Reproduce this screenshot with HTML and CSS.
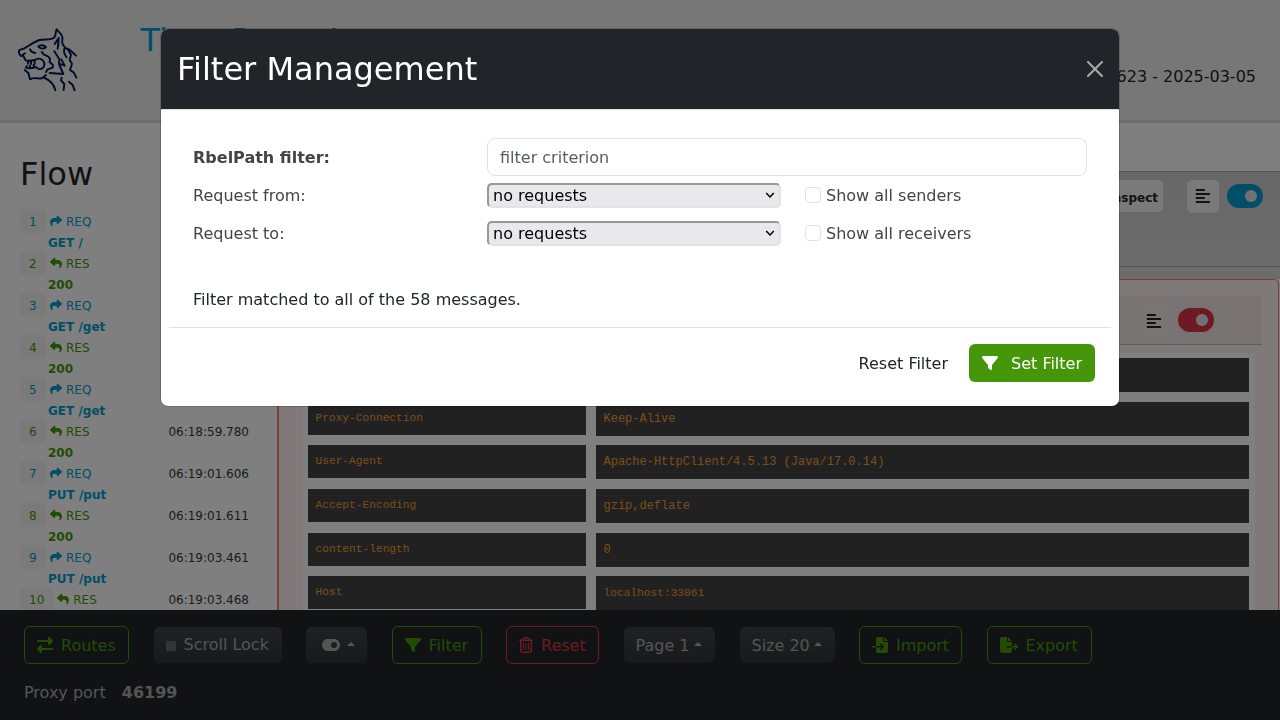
FILE: index.html
```
<!DOCTYPE html>
<html lang="en">
<head>
<meta charset="utf-8">
<title>Tiger Proxy Log</title>
<link rel="stylesheet" href="styles.css">
</head>
<body>
<svg width="0" height="0" class="sprite" aria-hidden="true">
  <symbol id="share" viewBox="0 0 512 512"><path d="M307 34.8c-11.5 5.1-19 16.6-19 29.2v64H176C78.8 128 0 206.8 0 304C0 417.3 81.5 467.9 100.2 478.1c2.5 1.4 5.3 1.9 8.1 1.9c10.9 0 19.7-8.9 19.7-19.7c0-7.5-4.3-14.4-9.8-19.5C108.8 431.9 96 414.4 96 384c0-53 43-96 96-96h96v64c0 12.6 7.4 24.1 19 29.2s25 3 34.4-5.4l160-144c6.7-6.1 10.6-14.7 10.6-23.8s-3.8-17.7-10.6-23.8l-160-144c-9.4-8.5-22.9-10.6-34.4-5.4z"/></symbol>
  <symbol id="filter" viewBox="0 0 512 512"><path d="M3.9 54.9C10.5 40.9 24.5 32 40 32H472c15.5 0 29.5 8.9 36.1 22.9s4.6 30.5-5.2 42.5L320 320.9V448c0 12.1-6.8 23.2-17.7 28.6s-23.8 4.3-33.5-3l-64-48c-8.1-6-12.8-15.5-12.8-25.6V320.9L9 97.3C-.7 85.4-2.8 68.8 3.9 54.9z"/></symbol>
  <symbol id="lines" viewBox="0 0 16 16"><path d="M.8 2h9M.8 6H15M.8 10h9M.8 14H15" fill="none" stroke="currentColor" stroke-width="2"/></symbol>
</svg>

<div class="page">
  <header class="topbar">
    <svg class="logo" viewBox="0 0 240 240" width="80" height="80">
      <path d="M45 100C36 102 38 112 32 107C24 98 24 90 34 88C46 88 54 74 88 60C104 56 124 62 133 52C139 44 136 34 140 28C146 38 160 42 157 58C155 70 158 74 166 84L180 90L198 107"/>
      <path d="M85 80C90 73 103 75 108 81C101 88 91 87 85 80M60 88Q64 98 76 99M95 96L102 104L114 109L120 116L119 126L129 135L128 143L113 148L108 156"/>
      <path d="M40 108L47 121C58 125 68 120 77 119C88 112 100 118 103 129C105 143 94 149 86 147L77 141M54 124V131M63 122V132M74 121V132M50 143V138M60 143V137M71 141V135M47 143C56 146 68 145 77 141M44 150L55 159L60 178C72 170 82 177 96 175L108 165M104 174C118 180 132 194 136 211"/>
      <path d="M134 72L146 54L145 76M146 54L143 86M133 94L148 118L147 131L164 137L154 118M148 135L160 162L119 159M163 86C159 98 164 104 170 112M175 91L183 104L179 120L186 131L180 150L191 157L199 173M155 173L153 181L163 192L161 210M177 185L188 195L194 211"/>
    </svg>
    <h1 class="brand">Tiger Proxy Log</h1>
    <span class="build">623 - 2025-03-05</span>
  </header>

  <div class="content">
    <aside class="flow">
      <h2 class="flow-title">Flow</h2>
      <div class="entry req"><div class="line"><span class="num">1</span><svg class="arrow"><use href="#share"/></svg><span>REQ</span></div><b>GET /</b></div>
      <div class="entry res"><div class="line"><span class="num">2</span><svg class="arrow flip"><use href="#share"/></svg><span>RES</span></div><b>200</b></div>
      <div class="entry req"><div class="line"><span class="num">3</span><svg class="arrow"><use href="#share"/></svg><span>REQ</span></div><b>GET /get</b></div>
      <div class="entry res"><div class="line"><span class="num">4</span><svg class="arrow flip"><use href="#share"/></svg><span>RES</span></div><b>200</b></div>
      <div class="entry req"><div class="line"><span class="num">5</span><svg class="arrow"><use href="#share"/></svg><span>REQ</span></div><b>GET /get</b></div>
      <div class="entry res"><div class="line"><span class="num">6</span><svg class="arrow flip"><use href="#share"/></svg><span>RES</span><time>06:18:59.780</time></div><b>200</b></div>
      <div class="entry req"><div class="line"><span class="num">7</span><svg class="arrow"><use href="#share"/></svg><span>REQ</span><time>06:19:01.606</time></div><b>PUT /put</b></div>
      <div class="entry res"><div class="line"><span class="num">8</span><svg class="arrow flip"><use href="#share"/></svg><span>RES</span><time>06:19:01.611</time></div><b>200</b></div>
      <div class="entry req"><div class="line"><span class="num">9</span><svg class="arrow"><use href="#share"/></svg><span>REQ</span><time>06:19:03.461</time></div><b>PUT /put</b></div>
      <div class="entry res"><div class="line"><span class="num">10</span><svg class="arrow flip"><use href="#share"/></svg><span>RES</span><time>06:19:03.468</time></div></div>
    </aside>

    <main class="messages">
      <div class="msg-head">
        <button class="inspect">Inspect</button>
        <button class="square"><svg width="16" height="16"><use href="#lines"/></svg></button>
        <span class="toggle blue"></span>
      </div>
      <div class="msg-gap"></div>
      <section class="card">
        <div class="card-head">
          <button class="square"><svg width="16" height="16"><use href="#lines"/></svg></button>
          <span class="toggle red"></span>
        </div>
        <div class="headers">
          <div class="row"><span class="key"></span><span class="val"></span></div>
          <div class="row"><span class="key">Proxy-Connection</span><span class="val">Keep-Alive</span></div>
          <div class="row"><span class="key">User-Agent</span><span class="val">Apache-HttpClient/4.5.13 (Java/17.0.14)</span></div>
          <div class="row"><span class="key">Accept-Encoding</span><span class="val">gzip,deflate</span></div>
          <div class="row"><span class="key">content-length</span><span class="val">0</span></div>
          <div class="row"><span class="key">Host</span><span class="val small">localhost:33061</span></div>
        </div>
      </section>
    </main>
  </div>

  <footer class="bottombar">
    <div class="tools">
      <button class="btn green w-routes"><svg width="16" height="16" viewBox="0 0 512 512"><path d="M32 96l320 0V32c0-12.9 7.8-24.6 19.8-29.6s25.7-2.2 34.9 6.9l96 96c6 6 9.4 14.1 9.4 22.6s-3.4 16.6-9.4 22.6l-96 96c-9.2 9.2-22.9 11.9-34.9 6.9s-19.8-16.6-19.8-29.6V160L32 160c-17.7 0-32-14.3-32-32s14.3-32 32-32zM480 352c17.7 0 32 14.3 32 32s-14.3 32-32 32H160v64c0 12.9-7.8 24.6-19.8 29.6s-25.7 2.2-34.9-6.9l-96-96c-6-6-9.4-14.1-9.4-22.6s3.4-16.6 9.4-22.6l96-96c9.2-9.2 22.9-11.9 34.9-6.9s19.8 16.6 19.8 29.6l0 64H480z"/></svg><span>Routes</span></button>
      <button class="btn dark w-scroll"><i class="box"></i><span>Scroll Lock</span></button>
      <button class="btn dark w-toggle"><svg width="18" height="16" viewBox="0 0 576 512"><path d="M192 64C86 64 0 150 0 256S86 448 192 448H384c106 0 192-86 192-192s-86-192-192-192H192zm192 96a96 96 0 1 1 0 192 96 96 0 1 1 0-192z"/></svg><i class="caret"></i></button>
      <button class="btn green w-filter"><svg width="16" height="16"><use href="#filter"/></svg><span>Filter</span></button>
      <button class="btn danger w-reset"><svg width="14" height="16" viewBox="0 0 448 512"><path d="M170.5 51.6L151.5 80h145l-19-28.4c-1.5-2.2-4-3.6-6.7-3.6H177.1c-2.7 0-5.2 1.3-6.7 3.6zm147-26.6L354.2 80H368h48 8c13.3 0 24 10.7 24 24s-10.7 24-24 24h-8V432c0 44.2-35.8 80-80 80H112c-44.2 0-80-35.8-80-80V128H24c-13.3 0-24-10.7-24-24S10.7 80 24 80h8H80 93.8l36.7-55.1C140.9 9.4 158.4 0 177.1 0h93.7c18.7 0 36.2 9.4 46.6 24.9zM80 128V432c0 17.7 14.3 32 32 32H336c17.7 0 32-14.3 32-32V128H80zm80 64V400c0 8.8-7.2 16-16 16s-16-7.2-16-16V192c0-8.8 7.2-16 16-16s16 7.2 16 16zm80 0V400c0 8.8-7.2 16-16 16s-16-7.2-16-16V192c0-8.8 7.2-16 16-16s16 7.2 16 16zm80 0V400c0 8.8-7.2 16-16 16s-16-7.2-16-16V192c0-8.8 7.2-16 16-16s16 7.2 16 16z"/></svg><span>Reset</span></button>
      <button class="btn dark w-page"><span>Page 1</span><i class="caret"></i></button>
      <button class="btn dark w-size"><span>Size 20</span><i class="caret"></i></button>
      <button class="btn green w-import"><svg width="16" height="16" viewBox="0 0 512 512"><path d="M128 64c0-35.3 28.7-64 64-64H352V128c0 17.7 14.3 32 32 32H512V448c0 35.3-28.7 64-64 64H192c-35.3 0-64-28.7-64-64V336H302.1l-39 39c-9.4 9.4-9.4 24.6 0 33.9s24.6 9.4 33.9 0l80-80c9.4-9.4 9.4-24.6 0-33.9l-80-80c-9.4-9.4-24.6-9.4-33.9 0s-9.4 24.6 0 33.9l39 39H128V64zm0 224v48H24c-13.3 0-24-10.7-24-24s10.7-24 24-24H128zM512 128H384V0L512 128z"/></svg><span>Import</span></button>
      <button class="btn green w-export"><svg width="18" height="16" viewBox="0 0 576 512"><path d="M0 64C0 28.7 28.7 0 64 0H224V128c0 17.7 14.3 32 32 32H384V288H216c-13.3 0-24 10.7-24 24s10.7 24 24 24H384V448c0 35.3-28.7 64-64 64H64c-35.3 0-64-28.7-64-64V64zM384 336V288H494.1l-39-39c-9.4-9.4-9.4-24.6 0-33.9s24.6-9.4 33.9 0l80 80c9.4 9.4 9.4 24.6 0 33.9l-80 80c-9.4 9.4-24.6 9.4-33.9 0s-9.4-24.6 0-33.9l39-39H384zm0-208H256V0L384 128z"/></svg><span>Export</span></button>
    </div>
    <div class="port">Proxy port <b>46199</b></div>
  </footer>
</div>

<div class="backdrop">
  <div class="modal">
    <div class="modal-head">
      <h2>Filter Management</h2>
      <svg class="close" width="16" height="16" viewBox="0 0 16 16"><path d="M.293.293a1 1 0 0 1 1.414 0L8 6.586 14.293.293a1 1 0 1 1 1.414 1.414L9.414 8l6.293 6.293a1 1 0 0 1-1.414 1.414L8 9.414l-6.293 6.293a1 1 0 0 1-1.414-1.414L6.586 8 .293 1.707a1 1 0 0 1 0-1.414z"/></svg>
    </div>
    <div class="modal-body">
      <div class="form">
        <label class="strong">RbelPath filter:</label>
        <input class="criterion" type="text" placeholder="filter criterion">
        <label>Request from:</label>
        <select><option>no requests</option></select>
        <label class="check"><input type="checkbox"><span>Show all senders</span></label>
        <label>Request to:</label>
        <select><option>no requests</option></select>
        <label class="check"><input type="checkbox"><span>Show all receivers</span></label>
      </div>
      <p class="matched">Filter matched to all of the 58 messages.</p>
    </div>
    <div class="modal-foot">
      <button class="plain">Reset Filter</button>
      <button class="set"><svg width="16" height="16"><use href="#filter"/></svg><span>Set Filter</span></button>
    </div>
  </div>
</div>
</body>
</html>
```
FILE: styles.css
```
* { box-sizing: border-box; }
body {
  margin: 0;
  font: 16px/24px "DejaVu Sans", sans-serif;
  color: #212529;
  overflow: hidden;
}
h1, h2, p { margin: 0; font-weight: 400; }
button { font: inherit; color: inherit; border: 0; padding: 0; }
svg { fill: currentColor; flex: none; }
.sprite { position: absolute; }

.page { height: 720px; display: flex; flex-direction: column; background: #fff; }

.topbar {
  height: 123px; flex: none; display: flex; align-items: flex-start;
  background: #eee; border-bottom: 3px solid #d8d8d8; padding: 20px 24px 0 10px;
}
.logo { fill: none; stroke: #001a52; stroke-width: 5.8; stroke-linecap: round; stroke-linejoin: round; }
.brand { font-size: 32px; line-height: 40px; color: #009cce; margin-left: 50.5px; }
.build { margin-left: auto; padding-top: 45px; }

.content { flex: 1; min-height: 0; display: flex; overflow: hidden; }
.flow { width: 277px; flex: none; padding: 30px 28px 0 20px; font-size: 12px; line-height: 18px; }
.flow-title { font-size: 32px; line-height: 42px; margin-bottom: 14px; }
.entry { height: 42px; }
.entry b { display: block; padding: 1px 0 0 28px; line-height: 18px; }
.line { display: flex; align-items: center; height: 24px; }
.line > span:not(.num), .line time { padding-top: 2px; }
.num { padding: 1px 9px 0; min-width: 26px; height: 24px; line-height: 24px; background: #f5f5f5; border-radius: 4px; margin-right: 4px; }
.arrow { width: 12px; height: 12px; margin-right: 4px; }
.flip { transform: scaleX(-1); }
.req { color: #009cce; }
.res { color: #459608; }
.line time { margin-left: auto; color: #363636; }

.messages { flex: 1; display: flex; flex-direction: column; padding: 48px 0 0; }
.msg-head {
  height: 96px; flex: none; display: flex; align-items: flex-start; padding: 8px 17px 0 0; justify-content: flex-end;
  background: linear-gradient(#cfcfcf, #d8d8d8); border: solid #a8a8a8; border-width: 1px 0;
}
.inspect { height: 32px; padding: 4px 5px 0 12px; background: #f5f5f5; border-radius: 5px; font-size: 12px; font-weight: 700; }
.square { width: 32px; height: 33px; margin: 0 8px 0 24px; padding: 8px 8px 0; display: flex; align-items: flex-start; justify-content: center; background: #f5f5f5; border-radius: 5px; }
.toggle { width: 36px; height: 24px; border-radius: 12px; margin-top: 4px; display: flex; justify-content: flex-end; padding: 6px; }
.toggle::after { content: ""; width: 12px; height: 12px; border-radius: 50%; background: #e2e2e2; }
.blue { background: #009cce; }
.red { background: #dc3545; }
.msg-gap { height: 12px; flex: none; background: #d8d8d8; }
.card { width: 1002px; flex: none; border: 2px solid #e8806f; border-width: 1px 1px 1px 2px; border-radius: 5px; background: #fff5f2; padding: 16px 16px 0 24px; }
.card-head {
  height: 49px; display: flex; align-items: flex-start; justify-content: flex-end; padding: 8px 48px 0 0;
  background: #f0e7e5; border-bottom: 1px solid #c3bab9; border-radius: 5px 5px 0 0;
}
.card-head .square { background: #f1ebea; padding-top: 9px; }
.headers { background: #fff; margin: 8px 7px 0 0; padding: 5px 5px 20px; }
.row { display: grid; grid-template-columns: 278px 653px; column-gap: 10px; height: 43.65px; padding-top: .15px; align-items: start; font-family: "Liberation Mono", monospace; color: #f39c37; }
.key, .val { background: #424242; padding-left: 7.5px; }
.key { height: 32.9px; line-height: 33.3px; font-size: 11.2px; }
.val { height: 33.9px; line-height: 34.9px; font-size: 12px; }
.small { font-size: 11.2px; }

.bottombar { height: 110px; flex: none; background: #212529; padding: 16px 24px; }
.tools { display: flex; justify-content: flex-start; align-items: center; gap: 24.5px; height: 38px; }
.btn { display: flex; align-items: center; padding: 0 12px; height: 38px; border-radius: 6px; background: none; border: 1px solid; white-space: nowrap; flex: none; }
.btn svg { margin-right: 8px; }
.btn span, .set span, .check span { padding-top: 2px; }
.green { color: #459608; }
.danger { color: #dc3545; }
.dark { height: 36px; border: 0; color: #aaa; background: linear-gradient(#404246, #313338); }
.w-routes { width: 105px; }
.w-scroll { width: 128px; padding-bottom: 2px; }
.w-toggle { width: 61px; padding-left: 15.5px; }
.w-toggle svg { margin-right: 3px; }
.w-filter { width: 90px; }
.w-reset { width: 93px; }
.w-page { width: 91.5px; }
.w-size { width: 95px; }
.w-import { width: 103px; }
.w-export { width: 105px; }
.box { width: 10px; height: 10px; background: #686868; margin: 3px 8px 0 0; }
.caret { border: solid transparent; border-width: 0 4px 4px; border-bottom-color: currentColor; margin: -2px 0 0 4.5px; }
.port { margin-top: 17px; color: #aaa; }
.port b { margin-left: 11px; }

.backdrop { position: fixed; inset: 0; background: rgba(0, 0, 0, .5); padding-top: 28px; }
.modal { width: 960px; height: 379px; margin: 0 auto; background: #fff; background-clip: padding-box; border: 1px solid rgba(0, 0, 0, .175); border-radius: 8px; }
.modal-head { height: 81px; display: flex; align-items: center; justify-content: space-between; padding: 0 16px; background: #212529; color: #fff; border-bottom: 1px solid #dee2e6; border-radius: 7px 7px 0 0; }
.modal-head h2 { font-size: 32px; line-height: 48px; }
.close { opacity: .6; }
.modal-body { padding: 28px 32px 0; }
.form { display: grid; grid-template-columns: 294px 294px 282px; row-gap: 0; grid-auto-rows: 38px; align-items: center; color: #444; }
.form > label:not(.check) { padding-top: 2px; }
.strong { font-weight: 700; }
.criterion { grid-column: 2 / 4; width: 600px; height: 38px; border: 1px solid #dee2e6; border-radius: 8px; padding: 0 12px; font: inherit; }
.criterion::placeholder { color: #595c5f; opacity: 1; }
select {
  appearance: none; width: 294px; height: 25px; font: inherit; line-height: 20px; color: #000;
  background: #e9e8ed url("data:image/svg+xml,%3Csvg xmlns='http://www.w3.org/2000/svg' width='10' height='8'%3E%3Cpath d='M1.2 2l3.8 4 3.8-4' fill='none' stroke='%23000' stroke-width='1.5'/%3E%3C/svg%3E") no-repeat right 4px center;
  border: 2px solid; border-color: #979797 #e3e3e3 #e3e3e3 #979797; border-radius: 5px; padding: 1px 4px 0;
}
.check { display: flex; align-items: center; padding-left: 24px; }
.check input { appearance: none; width: 16px; height: 16px; margin: 0 5px 0 0; border: 1px solid #dee2e6; border-radius: 4px; }
.matched { padding-top: 36px; }
.modal-foot { margin: 15px 8px 0; border-top: 1px solid #dee2e6; display: flex; justify-content: flex-end; align-items: center; padding: 16px 16px 0 0; }
.plain { background: none; margin-right: 21px; padding-top: 2px; }
.set { width: 126px; height: 38px; display: flex; align-items: center; justify-content: space-between; padding: 0 13px; background: #459608; color: #fff; border-radius: 6px; }
```
